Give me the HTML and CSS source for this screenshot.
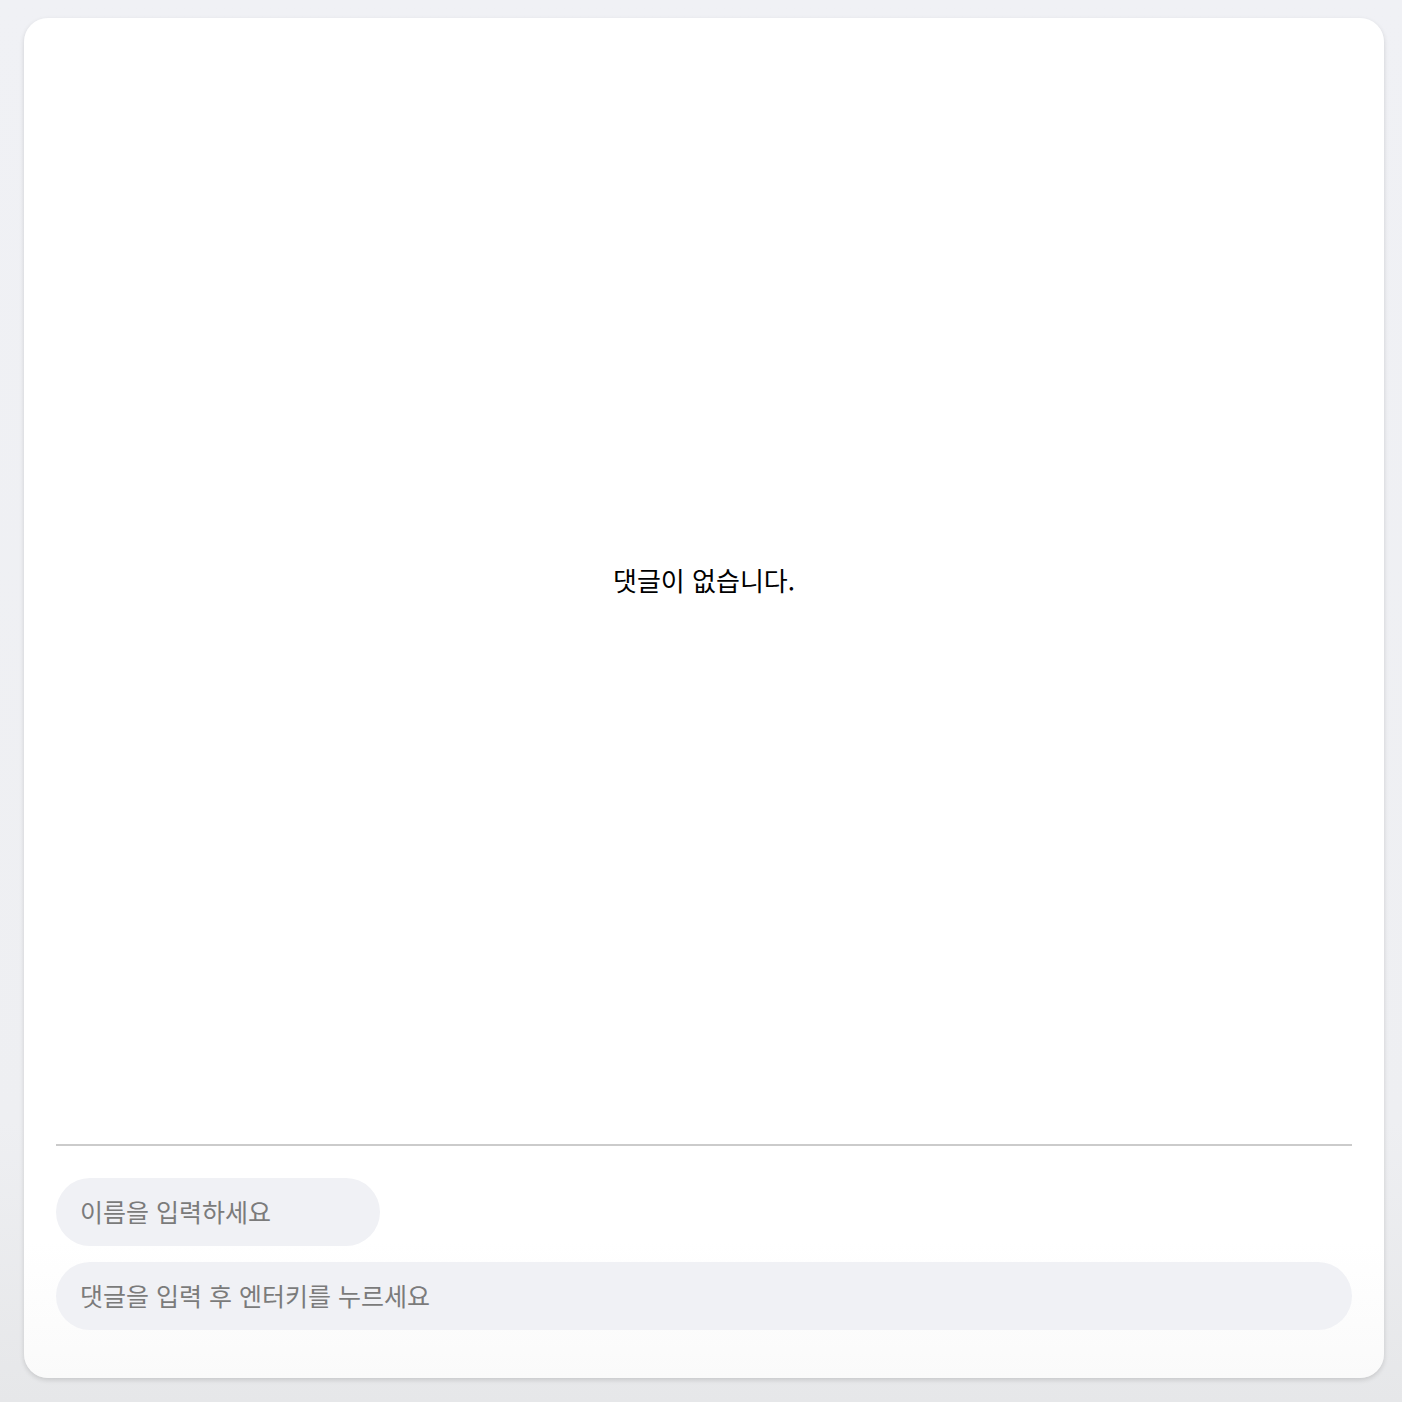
FILE: index.html
```html
<!DOCTYPE html>
<html lang="ko">
<head>
<meta charset="utf-8">
<title>댓글</title>
<link rel="stylesheet" href="styles.css">
</head>
<body>
<div class="card">
  <div class="list">
    <p class="empty">댓글이 없습니다.</p>
  </div>
  <div class="divider"></div>
  <form class="form">
    <input class="field name" type="text" placeholder="이름을 입력하세요">
    <input class="field comment" type="text" placeholder="댓글을 입력 후 엔터키를 누르세요">
  </form>
</div>
</body>
</html>
```
FILE: styles.css
```css
html, body {
  margin: 0;
  height: 100%;
}
body {
  background: linear-gradient(to bottom, #f0f1f5 0%, #eeeff2 80%, #e6e7e9 100%);
  padding: 18px 18px 24px 24px;
  box-sizing: border-box;
  font-family: "Noto Sans CJK KR", "Noto Sans", sans-serif;
}
.card {
  width: 1360px;
  height: 1360px;
  box-sizing: border-box;
  padding: 32px 32px 48px;
  border-radius: 24px;
  background: linear-gradient(to bottom, #ffffff 90%, #fafafa 100%);
  box-shadow: 0 2px 5px rgba(0, 0, 0, 0.14);
  display: flex;
  flex-direction: column;
}
.list {
  flex: 1;
  display: flex;
  align-items: center;
  justify-content: center;
  padding-bottom: 4px;
}
.empty {
  margin: 0;
  font-size: 26px;
  line-height: 1.3;
  color: #000;
}
.divider {
  height: 2px;
  background: #cbcbcb;
  margin: 30px 0 32px;
}
.form {
  display: flex;
  flex-direction: column;
  gap: 16px;
  margin: 0;
}
.field {
  height: 68px;
  border: none;
  outline: none;
  border-radius: 34px;
  background: #f0f1f5;
  padding: 0 24px 3px;
  box-sizing: border-box;
  font-family: "Noto Sans CJK KR", "Noto Sans", sans-serif;
  font-size: 25px;
  color: #222;
}
.field::placeholder {
  color: #7b7b7b;
}
.name {
  width: 324px;
}
.comment {
  width: 100%;
}
```
